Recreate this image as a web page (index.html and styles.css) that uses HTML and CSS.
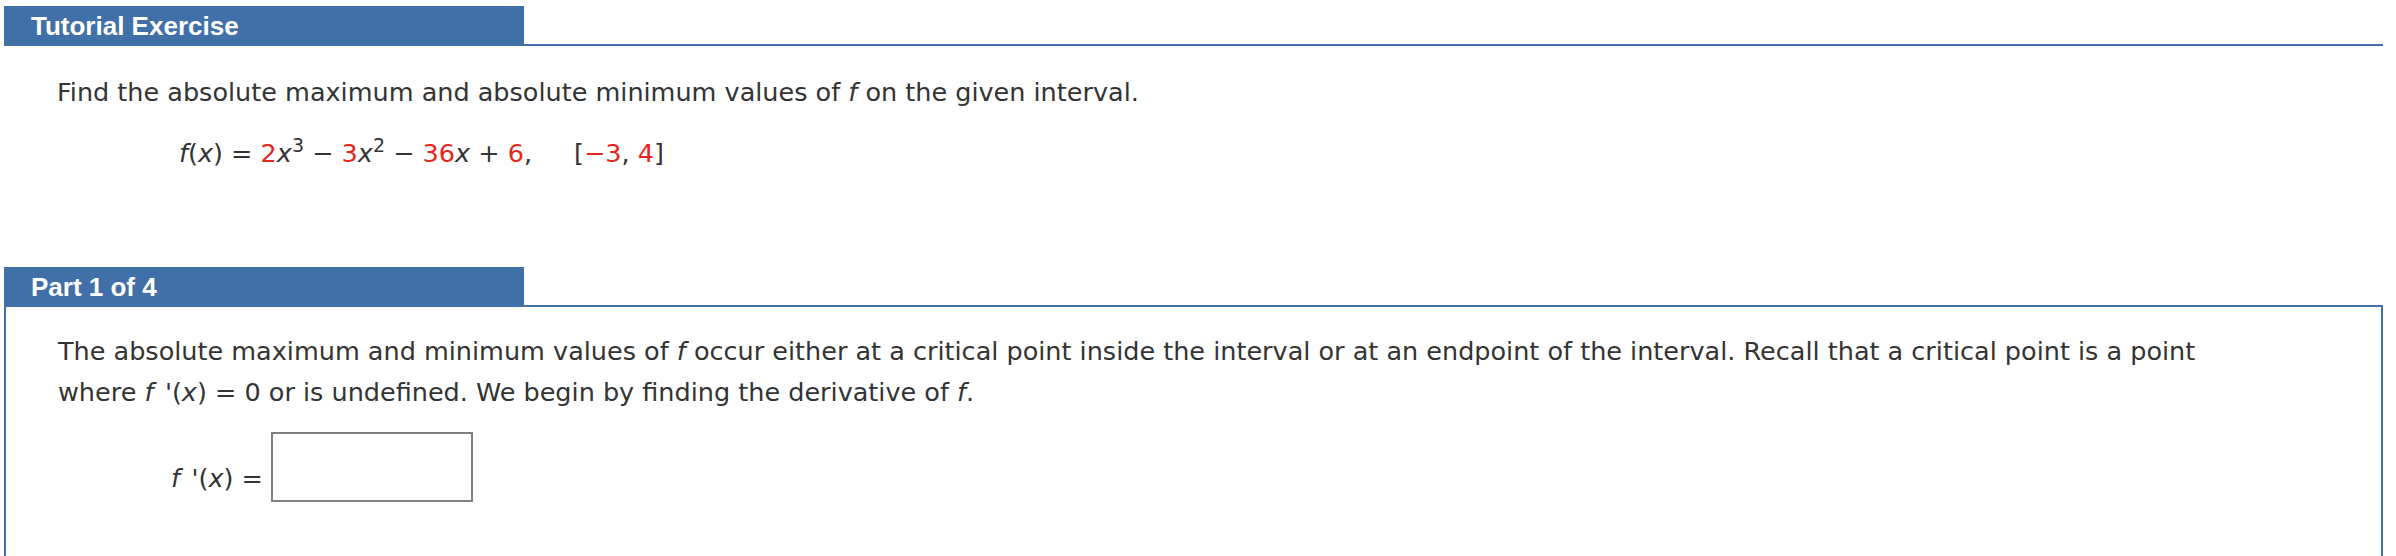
FILE: index.html
```html
<!DOCTYPE html>
<html lang="en">

<head>
  <meta charset="UTF-8" />
  <meta name="viewport" content="width=device-width, initial-scale=1.0" />
  <title>Tutorial Exercise</title>

  <link rel="stylesheet" href="styles.css">

</head>

<body>

  <div class="exercise">

    <!-- Cabecera del ejercicio -->
    <div class="tab-head">
      <div class="tab">Tutorial Exercise</div>
      <div class="tab-rule"></div>
    </div>

    <div class="question">
      <p class="prompt">Find the absolute maximum and absolute minimum values of <i>f</i> on the given interval.</p>
      <p class="formula">
        <i>f</i>(<i>x</i>) = <span class="red">2</span><i>x</i><sup>3</sup> &minus; <span class="red">3</span><i>x</i><sup>2</sup> &minus; <span class="red">36</span><i>x</i> + <span class="red">6</span>,<span class="gap"></span>[<span class="red">&minus;3</span>, <span class="red">4</span>]
      </p>
    </div>

    <!-- Parte 1 -->
    <div class="tab-head">
      <div class="tab">Part 1 of 4</div>
      <div class="tab-rule"></div>
    </div>

    <div class="part-box">
      <p class="step-text">The absolute maximum and minimum values of <i>f</i> occur either at a critical point inside the interval or at an endpoint of the interval. Recall that a critical point is a point where <i class="fn">f</i>'(<i>x</i>) = 0 or is undefined. We begin by finding the derivative of <i>f</i>.</p>

      <div class="answer-row">
        <span class="answer-label"><i class="fn">f</i>'(<i>x</i>) =</span>
        <span class="answer-input"></span>
      </div>
    </div>

  </div>

</body>

</html>
```

FILE: styles.css
```css
body {
  margin: 6px 13px 0 4px;
  background: #fff;
  font-family: "DejaVu Sans", Verdana, sans-serif;
  color: #333;
}

.tab-head {
  display: flex;
}

.tab {
  width: 493px;
  height: 40px;
  padding-left: 27px;
  background: #4170a8;
  color: #fff;
  font-family: "Liberation Sans", Arial, sans-serif;
  font-weight: bold;
  font-size: 26px;
  line-height: 40px;
}

.tab-rule {
  flex: 1;
  border-bottom: 2px solid #4170a8;
}

.question {
  padding: 29px 0 97px 53px;
}

.prompt {
  margin: 0;
  font-size: 25.5px;
  line-height: 34px;
}

.formula {
  margin: 27px 0 0 122px;
  font-size: 25.5px;
  line-height: 34px;
}

.formula sup {
  font-size: 19px;
  line-height: 0;
  vertical-align: 0.55em;
}

.gap {
  display: inline-block;
  width: 42px;
}

.red {
  color: #e4261b;
}

/* f seguida de prima: deja aire para que no se monte */
.fn {
  margin-right: 0.45em;
}

.part-box {
  box-sizing: border-box;
  height: 251px;
  border: 2px solid #4170a8;
  border-top: 0;
  border-bottom: 0;
  padding: 24px 40px 0 52px;
}

.step-text {
  max-width: 2200px;
  margin: 0;
  font-size: 25.5px;
  line-height: 41px;
}

.answer-row {
  display: flex;
  align-items: flex-end;
  margin: 19px 0 0 113px;
}

.answer-label {
  font-size: 25.5px;
  line-height: 30px;
  padding-bottom: 9px;
  margin-right: 8px;
}

.answer-input {
  width: 198px;
  height: 66px;
  border: 2px solid #808080;
  background: #fff;
}
```
